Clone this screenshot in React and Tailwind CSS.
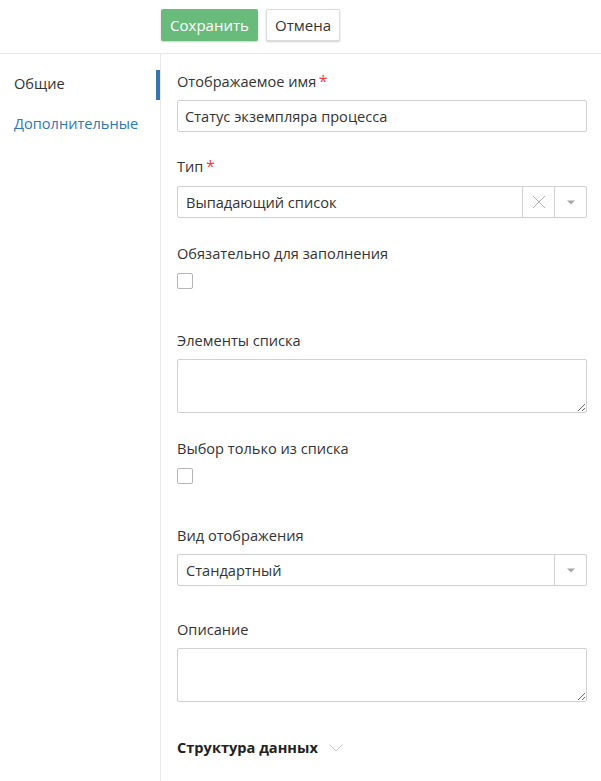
import React from "react";

function Label({ children, required, className = "" }) {
  return (
    <div className={`h-5 mb-2 flex items-center pb-0.5 text-[14.6px] leading-5 text-[#333333] ${className}`}>
      <span>{children}</span>
      {required && <span className="ml-[2.5px] text-[#f03e3e] text-base leading-5">*</span>}
    </div>
  );
}

function Caret() {
  return (
    <svg width="8" height="5" viewBox="0 0 8 5" className="block">
      <path d="M0 0.5h8L4 4.5z" fill="#a6a6a6" />
    </svg>
  );
}

function Cross() {
  return (
    <svg width="14" height="14" viewBox="0 0 14 14" className="block">
      <path d="M1 1l12 12M13 1L1 13" stroke="#b0b0b0" strokeWidth="1" fill="none" />
    </svg>
  );
}

function Select({ value, clearable }) {
  return (
    <div className="h-8 flex items-stretch border border-[#d0d0d0] rounded-[2px] bg-white text-[14.6px] text-[#333333]">
      <div className="flex-1 flex items-center pl-2 pt-px">{value}</div>
      {clearable && (
        <div className="w-8 flex items-center justify-center border-l border-[#d0d0d0]">
          <Cross />
        </div>
      )}
      <div className="w-8 flex items-center justify-center border-l border-[#d0d0d0]">
        <Caret />
      </div>
    </div>
  );
}

function Checkbox() {
  return <div className="w-4 h-4 border border-[#b5b5b5] rounded-[2px] bg-white" />;
}

function Area() {
  return (
    <textarea className="block w-full h-[54px] border border-[#d0d0d0] rounded-[2px] bg-white outline-none resize-y" />
  );
}

export default function App() {
  return (
    <div className="w-[601px] h-[781px] overflow-hidden bg-white font-['Open_Sans',sans-serif] text-[14.6px]">
      <header className="h-[54px] border-b border-[#e8e8e8] pl-[161px] pt-[9px] flex items-start gap-2">
        <button className="h-8 w-[97px] rounded-[2px] bg-[#69bb7b] text-white text-[15px] leading-8 text-center shadow-[0_1px_2px_rgba(0,0,0,0.2)]">
          Сохранить
        </button>
        <button className="h-8 w-[74px] rounded-[2px] border border-[#dcdcdc] bg-white text-[#333333] text-[15px] text-center shadow-[0_1px_2px_rgba(0,0,0,0.2)]">
          Отмена
        </button>
      </header>
      <div className="flex h-[727px]">
        <aside className="w-[161px] shrink-0 border-r border-[#e8e8e8] pt-4">
          <div className="h-[30px] flex items-center pl-[14px] pb-0.5 border-r-4 border-[#2f77b5] text-[#333333]">Общие</div>
          <div className="h-[30px] mt-2.5 flex items-center pl-[14px] pb-0.5 text-[#2f77b5]">Дополнительные</div>
        </aside>
        <main className="w-[410px] ml-4 pt-[18px]">
          <Label required>Отображаемое имя</Label>
          <div className="h-8 flex items-center pl-[7px] pt-px border border-[#d0d0d0] rounded-[2px] text-[#333333]">
            Статус экземпляра процесса
          </div>

          <Label required className="mt-[25px] !mb-[9px]">Тип</Label>
          <Select value="Выпадающий список" clearable />

          <Label className="mt-[26px] !mb-[9px]">Обязательно для заполнения</Label>
          <Checkbox />

          <Label className="mt-[42px]">Элементы списка</Label>
          <Area />

          <Label className="mt-[26px] !mb-[9px]">Выбор только из списка</Label>
          <Checkbox />

          <Label className="mt-[42px]">Вид отображения</Label>
          <Select value="Стандартный" />

          <Label className="mt-[34px]">Описание</Label>
          <Area />

          <div className="mt-9 h-5 flex items-center gap-[11px] text-[14.6px] font-bold text-[#222222]">
            <span>Структура данных</span>
            <svg width="14" height="8" viewBox="0 0 14 8" className="block">
              <path d="M0.500 0.500L7 7l6.500-6.500" stroke="#c4c4c4" strokeWidth="1" fill="none" />
            </svg>
          </div>
        </main>
      </div>
    </div>
  );
}
